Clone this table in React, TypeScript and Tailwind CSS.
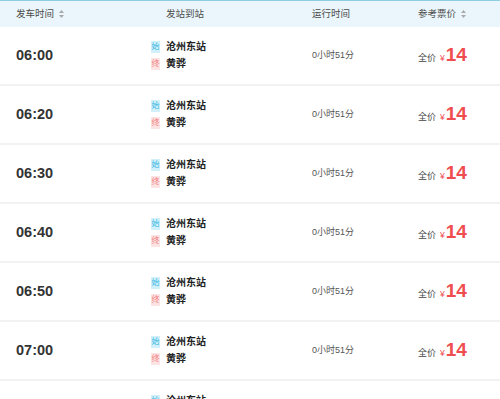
const rows = ["06:00", "06:20", "06:30", "06:40", "06:50", "07:00", "07:10"];

function SortIcon() {
  return (
    <svg width="5" height="8" viewBox="0 0 5 8" className="ml-[5px] inline-block">
      <path d="M2.5 0 L5 3 L0 3 Z" fill="#a9a9a9" />
      <path d="M2.5 8 L5 5 L0 5 Z" fill="#a9a9a9" />
    </svg>
  );
}

export default function App() {
  const font = { fontFamily: '"Liberation Sans", "Noto Sans CJK SC", sans-serif' };
  return (
    <div className="w-[500px] h-[399px] overflow-hidden bg-white" style={font}>
      <div className="grid grid-cols-[149px_163px_106px_1fr] items-center h-[27px] bg-[#eaf6fb] border-t border-[#8ccfe0] text-[9.5px] text-[#4a4a4a]">
        <div className="pl-4 flex items-center">
          发车时间
          <SortIcon />
        </div>
        <div className="pl-[17px]">发站到站</div>
        <div>运行时间</div>
        <div className="flex items-center">
          参考票价
          <SortIcon />
        </div>
      </div>

      {rows.map((t) => (
        <div
          key={t}
          className="grid grid-cols-[149px_163px_106px_1fr] items-center h-[59px] border-b-2 border-[#f2f2f2]"
        >
          <div className="pl-4 text-[14.5px] font-bold text-[#333]">{t}</div>
          <div className="pl-[2px] flex flex-col gap-[5px]">
            <div className="flex items-center">
              <span className="w-[9px] h-[12px] bg-[#d2f0fa] text-[#3cb9e3] text-[8px] leading-[12px] text-center">始</span>
              <span className="ml-[6px] text-[10px] font-bold text-[#222] leading-[12px]">沧州东站</span>
            </div>
            <div className="flex items-center">
              <span className="w-[9px] h-[12px] bg-[#fde4e4] text-[#ef7b7b] text-[8px] leading-[12px] text-center">终</span>
              <span className="ml-[6px] text-[10px] font-bold text-[#222] leading-[12px]">黄骅</span>
            </div>
          </div>
          <div className="text-[9px] text-[#555]">0小时51分</div>
          <div className="flex items-baseline text-[#ef4d4f]">
            <span className="text-[9px] text-[#444]">全价</span>
            <span className="ml-[4px] text-[8.5px]">¥</span>
            <span className="ml-[1px] text-[19px] font-bold leading-none">14</span>
          </div>
        </div>
      ))}
    </div>
  );
}
